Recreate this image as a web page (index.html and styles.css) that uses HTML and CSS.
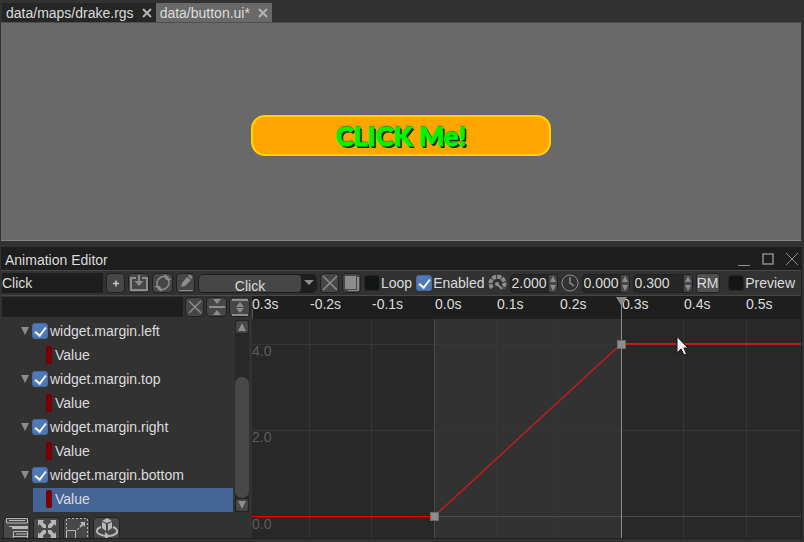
FILE: index.html
```html
<!DOCTYPE html>
<html lang="en">
<head>
<meta charset="utf-8">
<title>Animation Editor</title>
<link rel="stylesheet" href="styles.css">
</head>
<body>
<nav class="tabs">
  <div class="tab"><a href="#drake">data/maps/drake.rgs</a><button class="tab-close" aria-label="Close drake.rgs"><svg width="10" height="10"><path d="M1 1L9 9M9 1L1 9"/></svg></button></div>
  <div class="tab active"><a href="#button">data/button.ui*</a><button class="tab-close" aria-label="Close button.ui"><svg width="10" height="10"><path d="M1 1L9 9M9 1L1 9"/></svg></button></div>
</nav>
<main class="viewport"><button class="game-button">CLICK Me!</button></main>
<section class="editor">
  <header class="titlebar">
    <h1>Animation Editor</h1>
    <button class="win" aria-label="Minimize"><svg width="12" height="14"><path d="M0 12.500H12"/></svg></button>
    <button class="win" aria-label="Maximize"><svg width="12" height="14"><path d="M1 1H11V11H1Z" stroke-width="1.500"/></svg></button>
    <button class="win" aria-label="Close"><svg width="12" height="14"><path d="M0 0L12 12M12 0L0 12"/></svg></button>
  </header>
  <div class="toolbar">
    <input class="field name" type="text" value="Click" aria-label="Animation name">
    <button class="tool" aria-label="Add"><svg width="18" height="18"><path class="bright" d="M6 9.500H12M9 6.500V12.500" stroke-width="1.500"/></svg></button>
    <button class="tool wide" aria-label="Import"><svg width="20" height="18"><path d="M7 4H2V16H18V4H13" stroke-width="2"/><path d="M10 1V9" stroke-width="2"/><path class="fill" d="M5.500 7H14.500L10 12Z"/></svg></button>
    <button class="tool wide" aria-label="Refresh"><svg width="20" height="18"><path d="M5 13A7 7 0 0 1 12 2.500M15 5A7 7 0 0 1 8 15.500" stroke-width="1.500"/><path class="fill" d="M1 12H7V16ZM19 6H13V2ZM11 0L16 3L12 5ZM9 18L4 15L8 13Z"/></svg></button>
    <button class="tool" aria-label="Rename"><svg width="18" height="18"><path class="fill" d="M4 13L5 9L10 3L14 6L8 12ZM11 2L12 1Q15 1 15 3V4L14 5Z"/><path d="M2 16.500H16"/></svg></button>
    <div class="select-wrap"><select aria-label="Animation"><option>Click</option></select><span class="arrow"><svg width="10" height="6"><path class="fill" d="M0 0H10L5 5Z"/></svg></span></div>
    <button class="tool" aria-label="Delete"><svg width="18" height="18"><path d="M2 2L16 16M16 2L2 16" stroke-width="1.500"/></svg></button>
    <button class="tool" aria-label="Clone"><svg width="18" height="18"><path class="fill" d="M2 2H13V15H2Z"/><path class="fill" d="M14 3H16V17H5V16H14Z"/></svg></button>
    <label class="check loop"><input type="checkbox">Loop</label>
    <label class="check"><input type="checkbox" checked>Enabled</label>
    <svg class="gauge" width="19" height="18"><path d="M4 14A7 7 0 1 1 15 14" stroke-width="4" stroke-dasharray="4 1"/><path d="M8 9L14 15" stroke-width="2"/><circle class="fill" cx="9" cy="10" r="2"/></svg>
    <div class="spin"><input type="text" value="2.000" aria-label="Speed"><span class="steps"><button aria-label="Increase speed"><svg width="8" height="8"><path class="fill" d="M1 7H7L4 1Z"/></svg></button><button aria-label="Decrease speed"><svg width="8" height="8"><path class="fill" d="M1 1H7L4 7Z"/></svg></button></span></div>
    <svg class="clock" width="18" height="20"><circle cx="9" cy="10" r="8"/><path d="M9 4V10L13 13" stroke-width="1.500"/></svg>
    <div class="spin"><input type="text" value="0.000" aria-label="Start"><span class="steps"><button aria-label="Increase start"><svg width="8" height="8"><path class="fill" d="M1 7H7L4 1Z"/></svg></button><button aria-label="Decrease start"><svg width="8" height="8"><path class="fill" d="M1 1H7L4 7Z"/></svg></button></span></div>
    <div class="spin long"><input type="text" value="0.300" aria-label="End"><span class="steps"><button aria-label="Increase end"><svg width="8" height="8"><path class="fill" d="M1 7H7L4 1Z"/></svg></button><button aria-label="Decrease end"><svg width="8" height="8"><path class="fill" d="M1 1H7L4 7Z"/></svg></button></span></div>
    <button class="rm">RM</button>
    <label class="check preview"><input type="checkbox">Preview</label>
  </div>
  <div class="body">
    <aside class="tracks">
      <div class="search">
        <input class="field" type="text" aria-label="Filter tracks">
        <button class="tool" aria-label="Clear filter"><svg width="18" height="18"><path d="M3 3L15 15M15 3L3 15" stroke-width="1.500"/></svg></button>
        <button class="tool wide" aria-label="Collapse all"><svg width="18" height="18"><path d="M1 9H17" stroke-width="2"/><path class="fill" d="M5 1H13L9 6ZM5 17H13L9 12Z"/></svg></button>
        <button class="tool wide" aria-label="Expand all"><svg width="18" height="18"><path d="M1 2H17M1 17H17" stroke-width="2"/><path class="fill" d="M5 9H13L9 4ZM5 10H13L9 15Z"/></svg></button>
      </div>
      <div class="tree-area">
        <div class="tree">
          <div class="row"><svg class="twist" width="8" height="8"><path class="fill" d="M0 0H8L4 8Z"/></svg><label class="check"><input type="checkbox" checked>widget.margin.left</label></div>
          <div class="row leaf"><i></i>Value</div>
          <div class="row"><svg class="twist" width="8" height="8"><path class="fill" d="M0 0H8L4 8Z"/></svg><label class="check"><input type="checkbox" checked>widget.margin.top</label></div>
          <div class="row leaf"><i></i>Value</div>
          <div class="row"><svg class="twist" width="8" height="8"><path class="fill" d="M0 0H8L4 8Z"/></svg><label class="check"><input type="checkbox" checked>widget.margin.right</label></div>
          <div class="row leaf"><i></i>Value</div>
          <div class="row"><svg class="twist" width="8" height="8"><path class="fill" d="M0 0H8L4 8Z"/></svg><label class="check"><input type="checkbox" checked>widget.margin.bottom</label></div>
          <div class="row leaf selected"><i></i>Value</div>
        </div>
        <div class="scroll">
          <button aria-label="Scroll up"><svg width="8" height="8"><path class="fill" d="M0 8H8L4 0Z"/></svg></button>
          <div class="rail"><div class="thumb"></div></div>
          <button aria-label="Scroll down"><svg width="8" height="8"><path class="fill" d="M0 0H8L4 8Z"/></svg></button>
        </div>
      </div>
      <div class="actions">
        <button aria-label="Add track"><svg width="24" height="24"><path class="soft" d="M1.500 5V.5H22.500V5H1.500M4 2.500H20M8.500 24V13.500H22.500V24M7.500 18.500H22"/><path class="soft" d="M7 9.500H23" stroke-width="3"/><path class="soft" d="M4 8.500H8M11 16H22"/></svg></button>
        <button aria-label="Zoom to fit"><svg width="24" height="24"><path class="softfill" d="M3 2H9L7.500 4L11 7V10H8L4.500 6L3 8ZM21 2V8L19.500 6L16 10H13V7L16.500 4L15 2ZM3 20V14L4.500 16L8 12H11V15L7.500 18L9 20ZM21 20H15L16.500 18L13 15V12H16L19.500 16L21 14Z"/></svg></button>
        <button aria-label="Scale keys"><svg width="24" height="24"><path class="soft" d="M1.500 11V.5H22.500V22" stroke-dasharray="2 2"/><path class="soft" d="M1.500 24V12.500H10.500V24M12 12L14 10"/><path class="soft" d="M15 9L18 6" stroke-width="2"/><path class="softfill" d="M15 4H20V9Z"/></svg></button>
        <button aria-label="Rotate view"><svg width="24" height="24"><path class="softfill" d="M12 0L17 3L12 5L7 3ZM7 4L11 6V13L7 10ZM17 4V10L13 13V6Z"/><path class="soft" d="M6 9C-1 12 1 16 10 18M18 9C25 12 23 17 14 18" stroke-width="2"/><path class="softfill" d="M10 14L15 18L10 22Z"/></svg></button>
      </div>
    </aside>
    <svg class="plot" width="100%" height="100%" role="img" aria-label="Curve of the selected track">
      <rect width="100%" height="23" fill="#1e1e1e"/>
      <rect y="23" width="100%" height="100%" fill="#282828"/>
      <rect x="182" y="23" width="187" height="100%" fill="#323232"/>
      <g class="grid">
        <path d="M57.500 23V600M119.500 23V600M244.500 23V600M306.500 23V600M431.500 23V600M494.500 23V600M0 48.500H2000M0 134.500H2000"/>
        <path class="axis" d="M182.500 23V600M0 220.500H2000"/>
      </g>
      <path d="M0.500 13V23" stroke="#555"/>
      <g class="ticks">
        <text x="0" y="13">0.3s</text><text x="58" y="13">-0.2s</text><text x="120" y="13">-0.1s</text><text x="183" y="13">0.0s</text><text x="245" y="13">0.1s</text><text x="308" y="13">0.2s</text><text x="370" y="13">0.3s</text><text x="432" y="13">0.4s</text><text x="494" y="13">0.5s</text>
      </g>
      <g class="values"><text x="0" y="60">4.0</text><text x="0" y="146">2.0</text><text x="0" y="233">0.0</text></g>
      <path d="M369.500 4V600" stroke="#8c8c8c"/>
      <path d="M364 1H375L369.500 10Z" fill="#888" stroke="none"/>
      <path d="M0 220.500H182" stroke="#f00000"/>
      <path d="M182 220.500L369 48" stroke="#d81818" stroke-width="1.300"/>
      <path d="M369 48H2000" stroke="#c41d1d" stroke-width="2"/>
      <rect x="178" y="216" width="9" height="9" fill="#6c6c6c"/><rect x="179" y="217" width="7" height="7" fill="#8c8c8c"/>
      <rect x="365" y="44" width="9" height="9" fill="#6c6c6c"/><rect x="366" y="45" width="7" height="7" fill="#8c8c8c"/>
      <path d="M425 40.500V57L429 53L432 59L434.500 58L432 52H436Z" fill="#f2f2f2" stroke="#111"/>
    </svg>
  </div>
</section>
</body>
</html>
```
FILE: styles.css
```css
* { box-sizing: border-box; }
body {
  margin: 0;
  height: 100vh;
  padding: 3px 2px 3px 1px;
  display: flex;
  flex-direction: column;
  overflow: hidden;
  background: #323232;
  color: #dcdcdc;
  font: 14px/16px "Liberation Sans", Arial, sans-serif;
}
button, input, select { font: inherit; color: inherit; margin: 0; padding: 0; border: 0; background: none; }
svg { display: block; fill: none; stroke: #8c8c8c; flex: none; }
rect { stroke: none; }
.fill { fill: #8c8c8c; stroke: none; }
.bright { stroke: #c8c8c8; }
.soft { stroke: #b8b8b8; }
.softfill { fill: #b8b8b8; stroke: none; }

.tabs { display: flex; height: 19px; padding-left: 1px; flex: none; }
.tab { display: flex; align-items: center; gap: 8px; padding: 0 4px; background: #262626; }
.tab a { color: inherit; text-decoration: none; }
.tab.active { background: #696969; }
.tab-close svg { stroke: #b4b4b4; stroke-width: 2; }
.viewport {
  flex: 219 1 0;
  display: flex;
  align-items: center;
  justify-content: center;
  background: #696969;
  border-bottom: 1px solid #858585;
  border-top: 1px solid #505050;
  margin: 0 1px 6px 0;
}
.game-button {
  width: 300px;
  height: 41px;
  margin-top: 8px;
  border: 2px solid #ffd400;
  border-radius: 14px;
  background: #ffa500;
  color: #00f500;
  font: 900 27px/36px Lato, sans-serif;
  -webkit-text-stroke: 1px #00f500;
  text-shadow: 1px 1px #0b2500, 2px 2px #0b2500, 0 -1px 1px #245500;
}

.editor {
  flex: 293 1 0;
  min-height: 0;
  display: flex;
  flex-direction: column;
  border-right: 1px solid #1e1e1e;
  border-bottom: 1px solid #1e1e1e;
}
.titlebar {
  display: flex;
  align-items: center;
  gap: 12px;
  height: 23px;
  flex: none;
  padding: 2px 3px 0 4px;
  background: #1e1e1e;
}
.titlebar h1 { flex: 1; margin: 0; font: inherit; }
.toolbar {
  display: flex;
  align-items: center;
  gap: 3px;
  height: 26px;
  flex: none;
  padding: 0 6px 0 1px;
  border-top: 1px solid #484848;
  border-bottom: 1px solid #484848;
}
.field { height: 20px; background: #1e1e1e; }
.name { width: 101px; }
.tool {
  width: 19px;
  height: 20px;
  display: flex;
  align-items: center;
  justify-content: center;
  flex: none;
  border: 1px solid #202020;
  border-radius: 4px;
  background: #464646;
}
.tool.wide { width: 21px; }
.select-wrap {
  width: 119px;
  height: 19px;
  display: flex;
  flex: none;
  border: 1px solid #1e1e1e;
  border-radius: 5px;
  background: #1e1e1e;
}
.select-wrap select {
  flex: 1;
  min-width: 0;
  appearance: none;
  text-align-last: center;
  padding-top: 4px;
  line-height: 14px;
  border-radius: 4px;
  background: #464646;
}
.arrow { width: 15px; display: grid; place-items: center; }
.check { display: flex; align-items: center; gap: 1px; }
.check input {
  appearance: none;
  width: 16px;
  height: 16px;
  flex: none;
  border: 1px solid #262626;
  border-radius: 3px;
  background: #141616;
  position: relative;
}
.check input:checked { background: #5078b4; border-color: #466ca4; }
.check input:checked::after {
  content: "";
  position: absolute;
  left: 4px;
  top: 1px;
  width: 5px;
  height: 9px;
  border: solid #f0f0f0;
  border-width: 0 2px 2px 0;
  transform: rotate(38deg);
}
.toolbar .check { padding-bottom: 1px; }
.loop { margin-right: 1px; }
.spin {
  width: 48px;
  height: 19px;
  display: flex;
  flex: none;
  border: 1px solid #202020;
  border-radius: 4px;
  background: #262626;
  overflow: hidden;
}
.spin.long { width: 60px; }
.spin input { flex: 1; min-width: 0; padding-left: 1px; }
.steps { display: grid; width: 8px; flex: none; background: #464646; }
.steps button { display: grid; place-items: center; }
.rm { width: 24px; height: 20px; border: 1px solid #222; border-radius: 3px; background: #505050; }
.preview { margin-left: auto; }

.body { display: flex; flex: 1; min-height: 0; gap: 2px; }
.tracks { width: 249px; flex: none; display: flex; flex-direction: column; min-height: 0; }
.search { display: flex; gap: 2px; height: 23px; padding: 1px 0 0 1px; flex: none; }
.search .field { flex: 1; min-width: 0; }
.tree-area { display: flex; gap: 2px; margin-top: 1px; padding-right: 1px; flex: none; }
.tree { flex: 1; }
.row { display: flex; align-items: center; height: 24px; padding: 0 0 2px 20px; }
.row .check { gap: 2px; margin-left: 3px; }
.leaf { margin-left: 32px; padding-left: 13px; gap: 3px; }
.leaf i { width: 6px; height: 18px; border-radius: 2px; background: #780000; }
.selected { background: #446496; }
.scroll { width: 14px; display: flex; flex-direction: column; background: #282828; }
.scroll button {
  height: 14px;
  display: grid;
  place-items: center;
  border: 1px solid #222;
  border-radius: 3px;
  background: #464646;
}
.rail { flex: 1; display: flex; align-items: flex-end; }
.thumb { width: 14px; height: 74%; border-radius: 7px; background: #484848; }
.actions { display: flex; gap: 3px; padding: 5px 0 0 2px; flex: 1; min-height: 0; overflow: hidden; }
.actions button {
  width: 27px;
  height: 28px;
  display: flex;
  justify-content: center;
  flex: none;
  border: 1px solid #222;
  border-radius: 4px;
  background: #484848;
}
.plot { flex: 1; min-width: 0; }
.grid { stroke: #363636; }
.axis { stroke: #4a4a4a; }
.ticks text { fill: #dcdcdc; stroke: none; }
.values text { fill: #5c5c5c; stroke: none; }
```
